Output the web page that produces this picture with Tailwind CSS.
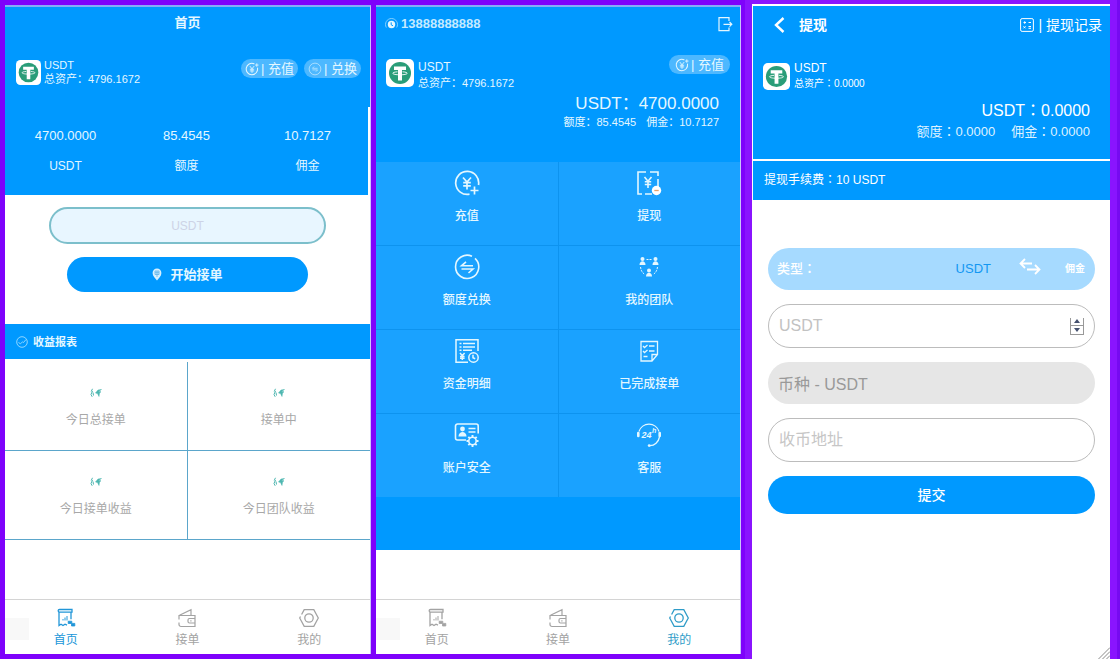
<!DOCTYPE html>
<html lang="zh-CN">
<head>
<meta charset="utf-8">
<meta name="viewport" content="width=device-width, initial-scale=1">
<title>USDT 钱包</title>
<script src="https://cdn.jsdelivr.net/npm/@tailwindcss/browser@4"></script>
</head>
<body class="font-['Liberation_Sans','Noto_Sans_CJK_SC',sans-serif] text-[12px] leading-4">

<!-- Shared icon symbols -->
<svg class="hidden" aria-hidden="true">
  <symbol id="tether" viewBox="0 0 28 28">
    <rect width="28" height="28" rx="5" fill="#fff"/>
    <circle cx="14" cy="14" r="11" fill="#2a9d78"/>
    <path d="M8 7.500h12v3.500h-4V21.500h-4V11H8z" fill="#fff"/>
    <path d="M11.500 12.800c-3 .200-4.700.800-4.700 1.500 0 .900 3.200 1.500 7.200 1.500s7.200-.600 7.200-1.500c0-.700-1.700-1.300-4.700-1.500" fill="none" stroke="#fff" stroke-width=".9"/>
  </symbol>
  <symbol id="coin" viewBox="0 0 16 16" fill="none" stroke="currentColor" stroke-linecap="round">
    <path d="M14.300 7a6.500 6.500 0 1 1-4-5" stroke-width="1.200"/>
    <path d="M5.800 5 8 7.800 10.200 5M8 7.800V12M6 8.300h4M6 10.200h4M12 3.500h3M13.500 2v3" stroke-width="1"/>
  </symbol>
  <symbol id="swap" viewBox="0 0 16 16" fill="none" stroke="currentColor" stroke-width=".9" opacity=".75">
    <circle cx="8" cy="8" r="6.700"/>
    <path d="M11 7.200H5l2-2M5 9h6l-2 2"/>
  </symbol>
  <symbol id="tab-home" viewBox="0 0 20 20" fill="none" stroke="currentColor" stroke-width="1.300">
    <path d="M3.500 1.500h12.500v2.700H3.500a1.350 1.350 0 0 1 0-2.700zM3 4.200v13.300l2-1.300 2 1.300 2-1.300 2 1M15 4.200v7"/>
    <path d="M7 12.500V11M9 12.500v-3M11 12.500V8" stroke-width="1"/>
    <path d="M12.200 13.200h3.600v2.200h3v2.600h-3.300v-2.500h-3.300z" fill="currentColor" stroke-width=".8"/>
  </symbol>
  <symbol id="tab-order" viewBox="0 0 20 20" fill="none" stroke="currentColor" stroke-width="1.200">
    <path d="M2 11.500V7.500h16v11H4a2 2 0 0 1-2-2v-2M2.500 7.300 14 1.700V7M18 10.500h-5.500a1.500 1.500 0 0 0-1.500 1.500v1.500a1.500 1.500 0 0 0 1.500 1.500H18"/>
    <path d="M13.300 12.800h1.200"/>
  </symbol>
  <symbol id="tab-mine" viewBox="0 0 20 20" fill="none" stroke="currentColor" stroke-width="1.300">
    <path d="M1.500 8.500 .700 10l4.500 8.300h9.600L19.300 10l-4.500-8.300H5.200L2.600 6.500"/>
    <circle cx="10" cy="10" r="4.200"/>
  </symbol>
  <symbol id="spark" viewBox="0 0 12 10" fill="none" stroke="#4db6b0">
    <path d="M2.500 .800 1.200 3.500M2.500 3 1 6.500l1.200 2.300M3 4.500l.5 3" stroke-width="1"/>
    <path d="M11.500 1.500 8 2 5.500 5l2 .500L9 8.500 9.500 5 11 3.800 8.500 3.500z" fill="#4db6b0" stroke-width=".5"/>
  </symbol>
</svg>

<main class="flex min-h-screen bg-[#7e02fb]">

  <!-- Home -->
  <section class="mt-[5px] mb-[5px] ml-[5px] flex flex-[365_1_0%] flex-col border-t-2 border-r border-t-[#86acf8] border-r-[#c9c4fb] bg-white">
    <div class="bg-[#0099ff] text-[#e4f7ff]">
      <h1 class="py-2 text-center text-[13px] font-bold">首页</h1>
      <div class="flex items-start gap-[3px] pt-[19px] pr-[9px] pb-[21px] pl-[11px] text-[11px]">
        <svg class="mt-0.5 size-[25px] shrink-0"><use href="#tether"/></svg>
        <div class="flex-1 leading-[14px]">
          <p>USDT</p>
          <p>总资产：4796.1672</p>
        </div>
        <div class="mt-px flex gap-1.5 text-[13px]">
          <button class="flex h-[19px] items-center gap-0.5 rounded-full bg-[#4db8ff] px-1"><svg class="size-[14px]"><use href="#coin"/></svg>| 充值</button>
          <button class="flex h-[19px] items-center gap-0.5 rounded-full bg-[#4db8ff] px-1"><svg class="size-[14px]"><use href="#swap"/></svg>| 兑换</button>
        </div>
      </div>
      <dl class="grid grid-cols-3 border-r-2 border-white py-5 text-center leading-[18px]">
        <div class="flex flex-col-reverse gap-3"><dt>USDT</dt><dd class="text-[13px]">4700.0000</dd></div>
        <div class="flex flex-col-reverse gap-3"><dt>额度</dt><dd class="text-[13px]">85.4545</dd></div>
        <div class="flex flex-col-reverse gap-3"><dt>佣金</dt><dd class="text-[13px]">10.7127</dd></div>
      </dl>
    </div>

    <form class="flex flex-col items-center gap-[13px] pt-3 pb-8">
      <input type="text" aria-label="USDT" placeholder="USDT" class="h-[37px] w-[76%] rounded-full border-2 border-[#7cbfcb] bg-[#e8f6ff] text-center text-[12px] placeholder:text-[#cdd3e6]">
      <button type="button" class="flex h-[35px] w-[66%] items-center justify-center gap-2 rounded-full bg-[#0099ff] text-[13px] font-bold text-[#e4f7ff]">
        <svg class="h-[13px] w-[10px]" viewBox="0 0 10 13"><path d="M5 .500a4.400 4.400 0 0 1 4.400 4.400C9.400 8 6.800 10 5 12.500 3.200 10 .600 8 .600 4.900A4.400 4.400 0 0 1 5 .500z" fill="#d6f0ff"/><path d="M3 3h4v3.500H3zM3 4.700h4M5 3v6" fill="none" stroke="#5fb4ea" stroke-width=".8"/></svg>
        开始接单
      </button>
    </form>

    <h2 class="flex h-[35px] items-center gap-[5px] bg-[#0099ff] pl-[11px] text-[11px] font-bold text-[#e4f7ff]">
      <svg class="size-3" viewBox="0 0 12 12" fill="none" stroke="#9fdcff" stroke-width=".9"><circle cx="6" cy="6" r="5.300"/><path d="m2.500 6.500 2 1.300 2-2 1 .7L10 3.500"/></svg>
      收益报表
    </h2>

    <div class="grid grid-cols-2 pt-[3px] text-center text-[#a8a8a8]">
      <div class="flex flex-col items-center gap-3.5 border-r border-b border-[#5ba6cb] pt-[26px] pb-[22px]"><svg class="h-2.5 w-3"><use href="#spark"/></svg>今日总接单</div>
      <div class="flex flex-col items-center gap-3.5 border-b border-[#5ba6cb] pt-[26px] pb-[22px]"><svg class="h-2.5 w-3"><use href="#spark"/></svg>接单中</div>
      <div class="flex flex-col items-center gap-3.5 border-r border-b border-[#5ba6cb] pt-[26px] pb-[22px]"><svg class="h-2.5 w-3"><use href="#spark"/></svg>今日接单收益</div>
      <div class="flex flex-col items-center gap-3.5 border-b border-[#5ba6cb] pt-[26px] pb-[22px]"><svg class="h-2.5 w-3"><use href="#spark"/></svg>今日团队收益</div>
    </div>

    <nav class="relative mt-auto grid grid-cols-3 border-t border-[#d4d4d4] text-[#a3a3a3]">
      <span class="absolute top-[18px] left-0 h-[22px] w-6 bg-[#f8f8f8]"></span>
      <a href="#" class="flex flex-col items-center gap-1 pt-2 pb-1.5 text-[#2196d8]"><svg class="size-5"><use href="#tab-home"/></svg>首页</a>
      <a href="#" class="flex flex-col items-center gap-1 pt-2 pb-1.5"><svg class="size-5"><use href="#tab-order"/></svg>接单</a>
      <a href="#" class="flex flex-col items-center gap-1 pt-2 pb-1.5"><svg class="size-5"><use href="#tab-mine"/></svg>我的</a>
    </nav>
  </section>

  <!-- Profile -->
  <section class="mt-[5px] mr-1 mb-[5px] ml-[5px] flex flex-[364_1_0%] flex-col border-t-2 border-r border-t-[#86acf8] border-r-[#c9c4fb] bg-white">
    <div class="bg-[#0099ff] text-[#e4f7ff]">
      <header class="flex items-center gap-[3px] pt-[9px] pr-[7px] pl-[9px]">
        <svg class="size-[13px]" viewBox="0 0 13 13"><circle cx="6.500" cy="6.500" r="3.700" fill="#e4f7ff"/><path d="M6.200 4.300v2.500l1.800 1" stroke="#0099ff" fill="none"/><path d="M1.300 9.500A6 6 0 1 1 11.700 9.500" fill="none" stroke="#9fdcff" stroke-width=".8"/></svg>
        <h1 class="flex-1 text-[13px] font-bold text-[#c4eaff]">13888888888</h1>
        <button aria-label="退出"><svg class="size-4" viewBox="0 0 16 16" fill="none" stroke="currentColor" stroke-width="1.200"><path d="M12 5V1.600H2v13h10V11.500M6.500 8.300h8M12.500 6l2.300 2.300-2.300 2.300"/></svg></button>
      </header>
      <div class="flex items-start gap-1 px-2.5 pt-[27px]">
        <svg class="size-7 shrink-0"><use href="#tether"/></svg>
        <div class="flex-1">
          <p>USDT</p>
          <p class="text-[11px]">总资产：4796.1672</p>
        </div>
        <button class="-mt-1 flex h-[19px] items-center gap-0.5 rounded-full bg-[#4db8ff] px-1.5 text-[13px]"><svg class="size-[14px]"><use href="#coin"/></svg>| 充值</button>
      </div>
      <div class="px-[21px] pt-[3px] pb-8 text-right">
        <p class="text-[17px] leading-5">USDT：4700.0000</p>
        <p class="flex justify-end gap-2.5 text-[11px]"><span>额度：85.4545</span><span>佣金：10.7127</span></p>
      </div>

      <div class="grid grid-cols-2 gap-px bg-[#0d93ef] font-medium">
        <a href="#" class="flex flex-col items-center gap-3 bg-[#1aa2ff] pt-2 pb-[21px]">
          <svg class="size-[26px]" viewBox="0 0 26 26" fill="none" stroke="currentColor" stroke-width="1.700"><path d="M24.500 15A11.500 11.500 0 1 0 15.500 24.200"/><path d="m9 7.500 4 4.500 4-4.500M13 12v7.500M9.200 12.700h7.600M9.200 15.800h7.600M20.500 16.500v8M16.500 20.500h8"/></svg>充值</a>
        <a href="#" class="flex flex-col items-center gap-3 bg-[#1aa2ff] pt-2 pb-[21px]">
          <svg class="size-[26px]" viewBox="0 0 26 26" fill="none" stroke="currentColor" stroke-width="1.600"><path d="M10 2H2v22h4M9 24h7M14 2h8v4M22 9v8"/><path d="m8.500 7 3.500 4.300L15.500 7M12 11.300V18M8.800 11.800h6.400M8.800 14.500h6.400"/><circle cx="20.500" cy="20.500" r="4.700" fill="#fff" stroke="none"/><path d="M18.300 20.500h4.400" stroke="#e8a06a" stroke-width="1.300"/></svg>提现</a>
        <a href="#" class="flex flex-col items-center gap-3 bg-[#1aa2ff] pt-2 pb-[21px]">
          <svg class="size-[26px]" viewBox="0 0 26 26" fill="none" stroke="currentColor" stroke-width="1.600"><path d="M18 2.300a11.600 11.600 0 1 0 3 2"/><path d="M19 11.800H7.500L12 7.800M7.500 15h11.500L14.500 19"/></svg>额度兑换</a>
        <a href="#" class="flex flex-col items-center gap-3 bg-[#1aa2ff] pt-2 pb-[21px]">
          <svg class="size-[26px]" viewBox="0 0 26 26" fill="currentColor"><circle cx="6.500" cy="5" r="2"/><path d="M3.500 11c0-5 6-5 6 0z"/><circle cx="19.500" cy="5" r="2"/><path d="M16.500 11c0-5 6-5 6 0z"/><circle cx="13" cy="16.500" r="2"/><path d="M10 22.500c0-5 6-5 6 0z"/><path d="M10.500 5.500h5M4.500 13c.5 4 2 6 4.500 7.500M21.500 13c-.5 4-2 6-4.500 7.500" fill="none" stroke="currentColor" stroke-dasharray="2 1"/></svg>我的团队</a>
        <a href="#" class="flex flex-col items-center gap-3 bg-[#1aa2ff] pt-2 pb-[21px]">
          <svg class="size-[26px]" viewBox="0 0 26 26" fill="none" stroke="currentColor" stroke-width="1.500"><path d="M24 13V1.700H2v22.600h12"/><path d="M5.500 5.500h2M9 5.500h12M5.500 9h2M9 9h12M5.500 12.300h2M9 12.300h9M6 15l2.300 2.700L10.600 15M8.300 17.700V22M6 18.500h4.600M6 20.300h4.600"/><circle cx="19.500" cy="19.500" r="4.700"/><path d="M19 16.800v3l2.200 1"/></svg>资金明细</a>
        <a href="#" class="flex flex-col items-center gap-3 bg-[#1aa2ff] pt-2 pb-[21px]">
          <svg class="size-[26px]" viewBox="0 0 26 26" fill="none" stroke="currentColor" stroke-width="1.300"><path d="M5 3.500h16.500v13L16 23H5zM21.500 16.500H16V23"/><path d="m7 8 1.500 1.500L11.500 7M13 8h5.500M7 13l1.500 1.500 3-2.500M13 13h5.500M7.500 18.500h4"/></svg>已完成接单</a>
        <a href="#" class="flex flex-col items-center gap-3 bg-[#1aa2ff] pt-2 pb-[21px]">
          <svg class="size-[26px]" viewBox="0 0 26 26" fill="none" stroke="currentColor" stroke-width="1.600"><path d="M24.200 11.500V4a2 2 0 0 0-2-2H3.500a2 2 0 0 0-2 2v12a2 2 0 0 0 2 2H12M14.500 6.500h7M14.500 10h7"/><circle cx="8.500" cy="7" r="2.400" fill="currentColor" stroke="none"/><path d="M4.500 14.500c0-6 8-6 8 0z" fill="currentColor" stroke="none"/><circle cx="18.500" cy="19" r="3.700"/><path d="M18.500 13v2.300M18.500 22.700V25M12.500 19h2.300M22.200 19h2.300M14.300 14.800l1.600 1.600M21.100 21.600l1.600 1.600M14.300 23.200l1.600-1.600M21.100 16.400l1.600-1.600" stroke-width="1.900"/></svg>账户安全</a>
        <a href="#" class="flex flex-col items-center gap-3 bg-[#1aa2ff] pt-2 pb-[21px]">
          <svg class="size-[26px]" viewBox="0 0 26 26" fill="none" stroke="currentColor" stroke-width="1.300"><path d="M3 9.500a10.500 10.500 0 0 1 20 0M23.500 15c-1 5-5 8.500-9.500 8.700"/><path d="M2.300 11v3M23.700 11v3" stroke-width="2.600" stroke-linecap="round"/><circle cx="13.200" cy="23.600" r="1.400" fill="currentColor" stroke="none"/><text x="5.500" y="16" font-size="9" font-weight="bold" font-style="italic" fill="currentColor" stroke="none">24</text><text x="16" y="11" font-size="7" font-weight="bold" font-style="italic" fill="currentColor" stroke="none">h</text></svg>客服</a>
      </div>
      <div class="h-[53px]"></div>
    </div>

    <nav class="relative mt-auto grid grid-cols-3 border-t border-[#d4d4d4] text-[#a3a3a3]">
      <span class="absolute top-[18px] left-0 h-[22px] w-6 bg-[#f8f8f8]"></span>
      <a href="#" class="flex flex-col items-center gap-1 pt-2 pb-1.5"><svg class="size-5"><use href="#tab-home"/></svg>首页</a>
      <a href="#" class="flex flex-col items-center gap-1 pt-2 pb-1.5"><svg class="size-5"><use href="#tab-order"/></svg>接单</a>
      <a href="#" class="flex flex-col items-center gap-1 pt-2 pb-1.5 text-[#2f9cc8]"><svg class="size-5"><use href="#tab-mine"/></svg>我的</a>
    </nav>
  </section>

  <!-- Withdraw -->
  <div class="flex flex-[358_1_0%] border-r-[3px] border-[#760af0] bg-[#8a14fe] pt-1 pr-[7px] pl-[7px]">
    <section class="relative flex flex-1 flex-col border-t-2 border-l border-white bg-white">
      <div class="border-b-2 border-white bg-[#0099ff] text-white">
        <header class="flex items-center pt-[9px] pr-2 pl-5 text-[14px] leading-5">
          <button aria-label="返回" class="mr-3.5"><svg class="h-4 w-3" viewBox="0 0 12 16" fill="none" stroke="currentColor" stroke-width="2.400"><path d="M10.500 1 3 8l7.500 7"/></svg></button>
          <h1 class="flex-1 font-bold">提现</h1>
          <a href="#" class="flex items-center gap-1"><svg class="size-[14px]" viewBox="0 0 14 14" fill="none" stroke="currentColor"><rect x=".600" y=".600" width="12.800" height="12.800" rx="1.500"/><path d="M3.500 4.500h2.500M4.700 3.300v2.500M8.500 4.500h2.500M3.500 8.300l2 2M5.500 8.300l-2 2M8.500 8.500h2.500M8.500 10.300h2.500"/></svg>| 提现记录</a>
        </header>
        <div class="flex items-center gap-1 px-2.5 pt-[25px]">
          <svg class="size-[27px] shrink-0"><use href="#tether"/></svg>
          <div>
            <p>USDT</p>
            <p class="text-[10px]">总资产<span lang="zh-TW" class="font-['Noto_Sans_CJK_TC'] leading-none">：</span>0.0000</p>
          </div>
        </div>
        <div class="px-5 pt-[9px] pb-[19px] text-right">
          <p class="text-[16px] leading-5">USDT<span lang="zh-TW" class="font-['Noto_Sans_CJK_TC'] leading-none">：</span>0.0000</p>
          <p class="mt-[3px] flex justify-end gap-4 text-[13px] text-[#dff2ff]"><span>额度<span lang="zh-TW" class="font-['Noto_Sans_CJK_TC'] leading-none">：</span>0.0000</span><span>佣金<span lang="zh-TW" class="font-['Noto_Sans_CJK_TC'] leading-none">：</span>0.0000</span></p>
        </div>
      </div>
      <p class="bg-[#0099ff] px-[11px] pt-[11px] pb-3 text-white">提现手续费<span lang="zh-TW" class="font-['Noto_Sans_CJK_TC'] leading-none">：</span>10 USDT</p>

      <form class="flex flex-col gap-3.5 px-[15px] pt-12">
        <div class="flex h-[42px] items-center rounded-full bg-[#a6daff] pr-2.5 pl-[9px] text-[13px] text-white">
          <span class="flex-1 font-medium">类型<span lang="zh-TW" class="font-['Noto_Sans_CJK_TC'] leading-none">：</span></span>
          <button type="button" class="text-[#1397f2]">USDT</button>
          <button type="button" aria-label="切换" class="mr-6 mb-1.5 ml-7"><svg class="h-[17px] w-[22px]" viewBox="0 0 22 17" fill="none" stroke="currentColor" stroke-width="1.800"><path d="M13 5.500H2M6 1 1.500 5.500 6 10M8 11.500h12M16 7l4.500 4.500L16 16"/></svg></button>
          <button type="button" class="text-[10px] font-bold">佣金</button>
        </div>
        <div class="flex h-11 items-center rounded-full border border-[#bcbcbc] px-2.5">
          <input type="text" inputmode="decimal" aria-label="USDT" placeholder="USDT" class="min-w-0 flex-1 text-[16px] outline-none placeholder:text-[#c2c2c2]">
          <span class="flex flex-col border border-t-0 border-[#999]">
            <button type="button" aria-label="增加" class="flex h-2 w-3 items-center justify-center border-b border-[#999]"><svg class="h-1 w-1.5" viewBox="0 0 6 4"><path d="M0 4 3 0l3 4z" fill="#44506e"/></svg></button>
            <button type="button" aria-label="减少" class="flex h-2 w-3 items-center justify-center"><svg class="h-1 w-1.5" viewBox="0 0 6 4"><path d="m0 0 3 4 3-4z" fill="#44506e"/></svg></button>
          </span>
        </div>
        <input type="text" aria-label="币种" value="币种 - USDT" readonly class="h-[42px] rounded-full bg-[#e6e6e6] px-2.5 text-[16px] text-[#999]">
        <input type="text" aria-label="收币地址" placeholder="收币地址" class="h-11 rounded-full border border-[#bcbcbc] px-2.5 text-[16px] placeholder:text-[#c6c6c6]">
        <button type="button" class="h-[38px] rounded-full bg-[#0099ff] text-[14px] font-medium text-white">提交</button>
      </form>
      <svg class="absolute right-0 bottom-0 size-3" viewBox="0 0 12 12" stroke="#8a8a8a" fill="none"><path d="M.5 12 12 .5M4.500 12 12 4.500M8.500 12 12 8.500"/></svg>
    </section>
  </div>
</main>
</body>
</html>
